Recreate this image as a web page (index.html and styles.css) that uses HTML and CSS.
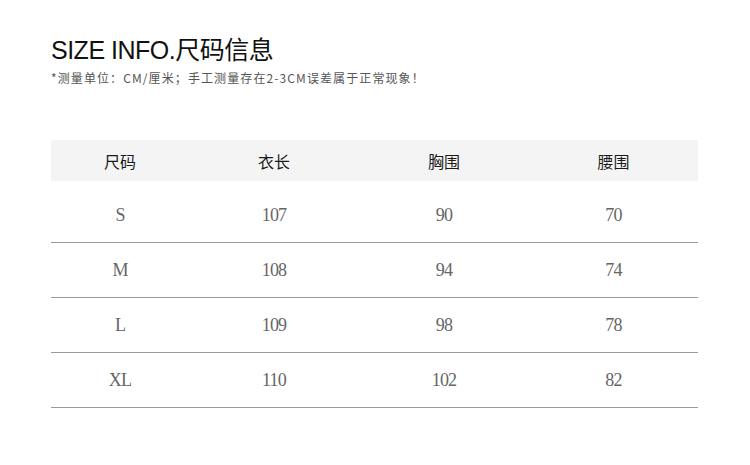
FILE: index.html
```html
<!DOCTYPE html>
<html lang="zh">
<head>
<meta charset="utf-8">
<link rel="stylesheet" href="styles.css">
</head>
<body>
<div class="page">
  <h1 class="title">SIZE INFO.尺码信息</h1>
  <p class="note">*测量单位：CM/厘米；手工测量存在2-3CM误差属于正常现象！</p>
  <div class="table">
    <div class="row head">
      <div class="c c1">尺码</div><div class="c">衣长</div><div class="c">胸围</div><div class="c">腰围</div>
    </div>
    <div class="body">
      <div class="row"><div class="c c1">S</div><div class="c">107</div><div class="c">90</div><div class="c">70</div></div>
      <div class="row"><div class="c c1">M</div><div class="c">108</div><div class="c">94</div><div class="c">74</div></div>
      <div class="row"><div class="c c1">L</div><div class="c">109</div><div class="c">98</div><div class="c">78</div></div>
      <div class="row"><div class="c c1">XL</div><div class="c">110</div><div class="c">102</div><div class="c">82</div></div>
    </div>
  </div>
</div>
</body>
</html>
```
FILE: styles.css
```css
html, body { margin: 0; padding: 0; background: #fff; }
body { width: 750px; height: 465px; overflow: hidden; }
.page { padding: 35px 52px 0 51px; }
.title {
  margin: 0;
  font-family: "Liberation Sans", "Noto Sans CJK SC", sans-serif;
  font-weight: 400;
  font-size: 25px;
  line-height: 30px;
  color: #111;
  letter-spacing: -0.5px;
}
.note {
  margin: 4px 0 0;
  font-family: "Noto Sans CJK SC", sans-serif;
  font-size: 12px;
  line-height: 18px;
  letter-spacing: 1.1px;
  color: #555;
}
.table { margin-top: 53px; width: 647px; }
.row { display: grid; grid-template-columns: 138px 170px 170px 169px; }
.head {
  height: 41px;
  background: #f4f4f4;
  align-items: center;
  font-family: "Noto Sans CJK SC", sans-serif;
  font-weight: 400;
  font-size: 16px;
  color: #1a1a1a;
}
.body { margin-top: 7px; }
.body .row {
  height: 54px;
  border-bottom: 1px solid #9a9a9a;
  align-items: center;
  font-family: "Liberation Serif", serif;
  font-size: 18px;
  letter-spacing: -0.8px;
  color: #666;
}
.c { text-align: center; }
```
